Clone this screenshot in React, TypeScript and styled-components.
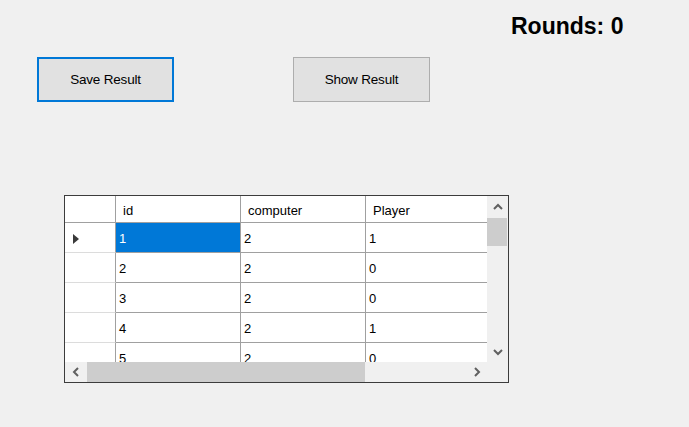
import React from "react";
import styled, { createGlobalStyle } from "styled-components";

const Global = createGlobalStyle`
  html, body { margin: 0; padding: 0; background: #f0f0f0; }
  body { font-family: "Liberation Sans", Arial, sans-serif; }
`;

const Form = styled.div`
  width: 689px;
  height: 427px;
  background: #f0f0f0;
  display: flex;
  flex-direction: column;
  overflow: hidden;
`;

const TopBar = styled.div`
  height: 57px;
  box-sizing: border-box;
  padding: 13px 0 0 511px;
`;

const Rounds = styled.div`
  font-size: 23px;
  font-weight: bold;
  line-height: 27px;
  color: #000;
`;

const ButtonRow = styled.div`
  display: flex;
  gap: 119px;
  padding-left: 37px;
  height: 45px;
`;

const Button = styled.button<{ $focused?: boolean }>`
  width: 137px;
  height: 45px;
  box-sizing: border-box;
  margin: 0;
  padding: 0;
  background: #e1e1e1;
  border: ${(p) => (p.$focused ? "2px solid #0078d7" : "1px solid #adadad")};
  font-family: "Liberation Sans", Arial, sans-serif;
  font-size: 13.5px;
  letter-spacing: -0.2px;
  color: #000;
`;

const GridBox = styled.div`
  margin: 93px 0 0 64px;
  width: 445px;
  height: 188px;
  box-sizing: border-box;
  border: 1px solid #3c3c3c;
  background: #f0f0f0;
  display: grid;
  grid-template-columns: 422px 21px;
  grid-template-rows: 166px 20px;
`;

const Viewport = styled.div`
  overflow: hidden;
  background: #fff;
  font-size: 13px;
  color: #000;
`;

const GridRow = styled.div<{ $height: number }>`
  display: flex;
  height: ${(p) => p.$height}px;
`;

const RowHeader = styled.div<{ $light?: boolean }>`
  flex: 0 0 50px;
  background: #fff;
  border-right: 1px solid #a0a0a0;
  border-bottom: 1px solid ${(p) => (p.$light ? "#dcdcdc" : "#a0a0a0")};
  display: flex;
  align-items: center;
`;

const Arrow = styled.span`
  margin: 2px 0 0 8px;
  width: 0;
  height: 0;
  border-left: 6px solid #3a3a3a;
  border-top: 5px solid transparent;
  border-bottom: 5px solid transparent;
`;

const HeaderCell = styled.div`
  flex: 0 0 117px;
  background: #fff;
  border-right: 1px solid #a0a0a0;
  border-bottom: 1px solid #a0a0a0;
  padding: 2px 0 0 7px;
  display: flex;
  align-items: center;
  white-space: nowrap;
`;

const Cell = styled.div<{ $selected?: boolean }>`
  flex: 0 0 121px;
  background: ${(p) => (p.$selected ? "#0078d7" : "#fff")};
  color: ${(p) => (p.$selected ? "#fff" : "#000")};
  border-right: 1px solid #a0a0a0;
  border-bottom: 1px solid #a0a0a0;
  padding: 2px 0 0 3px;
  display: flex;
  align-items: center;
`;

const VScroll = styled.div`
  display: flex;
  flex-direction: column;
  background: #f0f0f0;
`;

const HScroll = styled.div`
  display: flex;
  background: #f0f0f0;
`;

const ScrollBtn = styled.div`
  flex: 0 0 21px;
  height: 20px;
  width: 21px;
  display: flex;
  align-items: center;
  justify-content: center;
`;

const VBtn = styled(ScrollBtn)`
  height: 21px;
`;

const Track = styled.div<{ $vertical?: boolean }>`
  flex: 1;
  display: flex;
  flex-direction: ${(p) => (p.$vertical ? "column" : "row")};
`;

const Thumb = styled.div<{ $vertical?: boolean }>`
  background: #cdcdcd;
  ${(p) =>
    p.$vertical
      ? "height: 28px; margin: 1px 1px 0 0;"
      : "width: 278px; margin: 0 0 0 1px;"}
`;

const Corner = styled.div`
  background: #f0f0f0;
`;

type Dir = "up" | "down" | "left" | "right";
const points: Record<Dir, string> = {
  up: "1,6 5,2 9,6",
  down: "1,2 5,6 9,2",
  left: "6,1 2,5 6,9",
  right: "2,1 6,5 2,9",
};

const Chevron = ({ dir }: { dir: Dir }) => {
  const vertical = dir === "up" || dir === "down";
  return (
    <svg
      width={vertical ? 10 : 8}
      height={vertical ? 8 : 10}
      viewBox={vertical ? "0 0 10 8" : "0 0 8 10"}
    >
      <polyline
        points={points[dir]}
        fill="none"
        stroke="#606060"
        strokeWidth="2"
      />
    </svg>
  );
};

const rows = [
  { id: 1, computer: 2, player: 1 },
  { id: 2, computer: 2, player: 0 },
  { id: 3, computer: 2, player: 0 },
  { id: 4, computer: 2, player: 1 },
  { id: 5, computer: 2, player: 0 },
];

export default function App() {
  return (
    <>
      <Global />
      <Form>
        <TopBar>
          <Rounds>Rounds: 0</Rounds>
        </TopBar>
        <ButtonRow>
          <Button $focused>Save Result</Button>
          <Button>Show Result</Button>
        </ButtonRow>
        <GridBox>
          <Viewport>
            <GridRow $height={27}>
              <RowHeader />
              <HeaderCell>id</HeaderCell>
              <HeaderCell>computer</HeaderCell>
              <HeaderCell>Player</HeaderCell>
            </GridRow>
            {rows.map((r, i) => (
              <GridRow key={r.id} $height={30}>
                <RowHeader $light>{i === 0 && <Arrow />}</RowHeader>
                <Cell $selected={i === 0}>{r.id}</Cell>
                <Cell>{r.computer}</Cell>
                <Cell>{r.player}</Cell>
              </GridRow>
            ))}
          </Viewport>
          <VScroll>
            <VBtn>
              <Chevron dir="up" />
            </VBtn>
            <Track $vertical>
              <Thumb $vertical />
            </Track>
            <VBtn>
              <Chevron dir="down" />
            </VBtn>
          </VScroll>
          <HScroll>
            <ScrollBtn>
              <Chevron dir="left" />
            </ScrollBtn>
            <Track>
              <Thumb />
            </Track>
            <ScrollBtn>
              <Chevron dir="right" />
            </ScrollBtn>
          </HScroll>
          <Corner />
        </GridBox>
      </Form>
    </>
  );
}
